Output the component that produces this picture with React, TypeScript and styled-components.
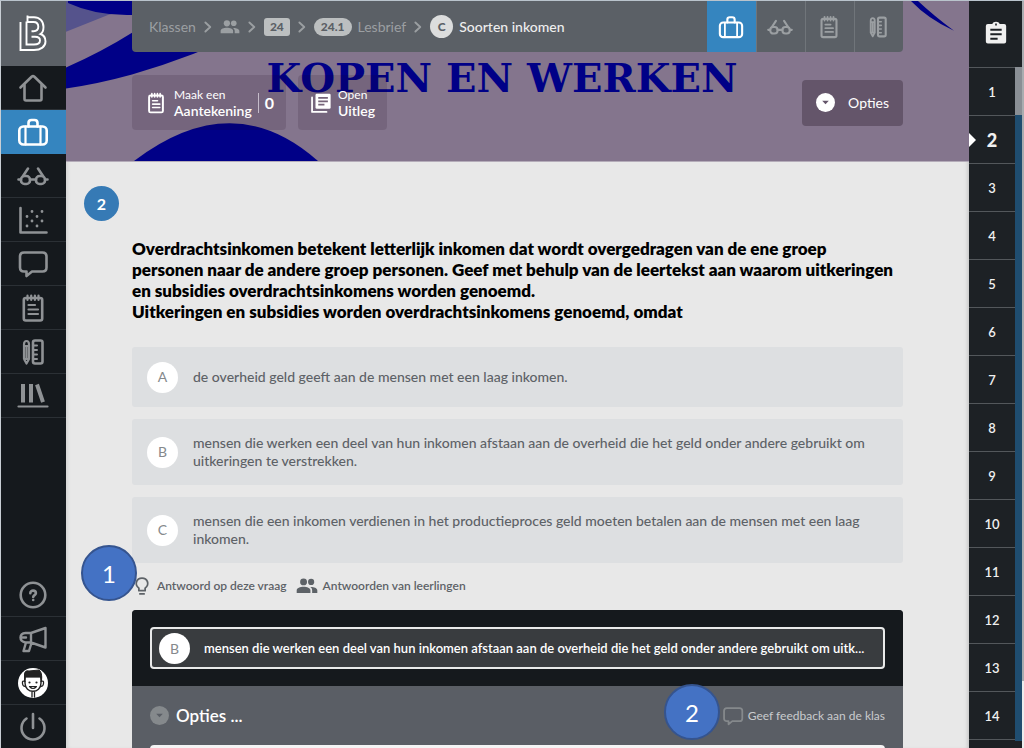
import React from "react";
import styled, { createGlobalStyle, css } from "styled-components";

const GlobalStyle = createGlobalStyle`
  *, *::before, *::after { box-sizing: border-box; }
  body {
    margin: 0;
    background: #e8e8e8;
    font-family: Lato, "Noto Sans", sans-serif;
    color: #000;
    overflow: hidden;
  }
  button { font: inherit; color: inherit; background: none; border: 0; padding: 0; cursor: pointer; }
  a { color: inherit; text-decoration: none; }
  h1, h2, p, ul, ol { margin: 0; padding: 0; }
  ul, ol { list-style: none; }
`;

/* ---------- icons ---------- */

type IconProps = { size?: number };

const Svg = styled.svg.attrs({ viewBox: "0 0 32 32", "aria-hidden": true })<{ $size: number }>`
  display: block;
  flex: none;
  width: ${(p) => p.$size}px;
  height: ${(p) => p.$size}px;
  fill: none;
  stroke: currentColor;
  stroke-width: 2.6;
  stroke-linecap: round;
  stroke-linejoin: round;
`;

const HomeIcon = ({ size = 32 }: IconProps) => (
  <Svg $size={size}>
    <path d="M3.500 15.500 14.600 4.800Q16 3.600 17.400 4.800L28.500 15.500" />
    <path d="M7.500 13V27Q7.500 28.500 9 28.500H23Q24.500 28.500 24.500 27V13" />
  </Svg>
);

const CaseIcon = ({ size = 32 }: IconProps) => (
  <Svg $size={size}>
    <rect x="2.300" y="10.500" width="27.400" height="18" rx="4" />
    <path strokeWidth="2.200" d="M8.500 10.500V28.500M23.500 10.500V28.500" />
    <path d="M11.500 10.500V7Q11.500 4 14.500 4H17.500Q20.500 4 20.500 7V10.500" />
  </Svg>
);

const GlassesIcon = ({ size = 32 }: IconProps) => (
  <Svg $size={size}>
    <rect x="4" y="16" width="9" height="8" rx="3.600" />
    <rect x="19" y="16" width="9" height="8" rx="3.600" />
    <path d="M1.500 19.500H4M28 19.500H30.500M13 19.500H19M6 16 11 8.500M26 16 21 8.500" />
  </Svg>
);

const ScatterIcon = ({ size = 32 }: IconProps) => (
  <Svg $size={size}>
    <path d="M3.500 4V28.500H29.500" />
    <path strokeWidth="2.800" d="M15 7.500h.01M25 7.500h.01M10 12.500h.01M20 12.500h.01M15 17h.01M25 17h.01M10 22h.01M20 22h.01" />
  </Svg>
);

const ChatIcon = ({ size = 32 }: IconProps) => (
  <Svg $size={size}>
    <path d="M7 4.500H25.500Q29.500 4.500 29.500 8.500V19.500Q29.500 23.500 25.500 23.500H15L9.500 28V23.500H7Q3 23.500 3 19.500V8.500Q3 4.500 7 4.500Z" />
  </Svg>
);

const NotesIcon = ({ size = 32 }: IconProps) => (
  <Svg $size={size}>
    <rect x="6.800" y="6" width="18.400" height="22.500" rx="2" />
    <path strokeWidth="2.200" d="M10.500 3.500V8M14.200 3.500V8M17.900 3.500V8M21.500 3.500V8M11.500 13H18M11.500 17.500H21M11.500 22H21" />
  </Svg>
);

const ToolsIcon = ({ size = 32 }: IconProps) => (
  <Svg $size={size}>
    <path strokeWidth="2.200" d="M7 8.500Q7 5 9.500 5T12 8.500V23L9.500 27.500 7 23ZM7 10H12M9.500 11V23M7 23H12" />
    <rect x="16" y="4.500" width="9.500" height="23" rx="2" />
    <path strokeWidth="2" d="M16 9.500H20M16 14H20M16 18.500H20M16 23H20" />
  </Svg>
);

const BooksIcon = ({ size = 32 }: IconProps) => (
  <Svg $size={size}>
    <path strokeLinecap="butt" strokeWidth="4" d="M6 4V22.500M14 4V22.500M20 4.500 26 22.200" />
    <path strokeWidth="2.200" d="M1.500 26.500H30.500" />
  </Svg>
);

const HelpIcon = () => (
  <Svg $size={32}>
    <circle cx="16" cy="16" r="12.300" />
    <path d="M13.300 14.200C13.300 10.700 18.900 10.800 18.900 14.200C18.900 16 16.200 16.200 16.200 18" />
    <path strokeWidth="2.600" d="M16.200 21h.01" />
  </Svg>
);

const MegaphoneIcon = () => (
  <Svg $size={32}>
    <path strokeWidth="2.400" d="M14 10H8.500Q3.500 10.500 3.500 14.500T8.500 19.500H14ZM14 10 28.500 5V24.500L14 19.500M9 19.500 6.500 28H12L14.500 20M3.500 14.500H9" />
  </Svg>
);

const PowerIcon = () => (
  <Svg $size={32}>
    <path d="M16 3V17M9.500 7.500A11.500 11.500 0 1 0 22.500 7.500" />
  </Svg>
);

const AvatarIcon = () => (
  <Svg $size={32}>
    <circle cx="16" cy="16" r="15" fill="#fff" stroke="none" />
    <path d="M8 9.500V16C8 27 24 27 24 16V9.500Z" fill="#fff" stroke="#222" strokeWidth="1.400" />
    <path d="M7.500 14V7Q8 3 12 4L22 3Q25.500 5 24.500 14L23.500 10H8.500Z" fill="#222" stroke="#222" strokeWidth="1" />
    <path d="M8 14.500Q5 13 5.500 16.500T8.500 19M24 14.500Q27 13 26.500 16.500T23.500 19M15 25V30M17.500 25V30" stroke="#222" strokeWidth="1.300" />
    <path d="M12.500 15.500h.01M19.500 15.500h.01" stroke="#222" strokeWidth="2.200" />
    <path d="M12.500 19.500H19.500Q16 23.500 12.500 19.500Z" fill="#fff" stroke="#222" strokeWidth="1.200" />
  </Svg>
);

const LogoSvg = styled.svg`
  width: 32px;
  height: 40px;
  fill: none;
  stroke: #fff;
  stroke-width: 1.900;
`;

const Logo = () => (
  <LogoSvg viewBox="0 0 32 40" role="img" aria-label="LB">
    <path d="M3.500 8V36H17C24 36 28.500 32.500 28.500 27.500C28.500 23.500 26.500 21 23.500 20C26 18.500 26.500 16 26.500 13C26.500 7 22.500 3.200 17 3.200H10.500" />
    <path d="M9.500 7.500V30.500H17C21 30.500 23 29 23 26.500C23 24 21 22.800 18 22.800H14.500" />
    <path d="M10.500 1.500V8H16.500C19.500 8 21.300 10 21.300 12.800C21.300 15.500 19.500 17.200 16.500 17.200H14.500" />
  </LogoSvg>
);

const PeopleIcon = ({ size = 22 }: IconProps) => (
  <Svg $size={size}>
    <g fill="currentColor" stroke="none">
      <circle cx="11" cy="10" r="5" />
      <circle cx="22" cy="10" r="4.500" />
      <path d="M1 26V22.500C1 15.500 21 15.500 21 22.500V26ZM22 17.500C26 17.500 31 19 31 22.500V26H23.500V22.500C23.500 20 22.500 18.500 20.500 17.500Z" />
    </g>
  </Svg>
);

const BulbIcon = () => (
  <Svg $size={20}>
    <path strokeWidth="2.800" strokeLinecap="butt" d="M11 23.500V19.500C3 13 7.500 3.500 16 3.500S29 13 21 19.500V23.500ZM11.500 28.500H20.500" />
  </Svg>
);

const BookStackIcon = () => (
  <Svg $size={22}>
    <path strokeWidth="2.600" d="M3 8V29H24" />
    <rect x="8" y="2.500" width="22" height="22" rx="2" fill="currentColor" stroke="none" />
    <path stroke="#766479" strokeLinecap="butt" d="M12 8.500H26M12 13.500H26M12 18.500H21" />
  </Svg>
);

const ClipboardIcon = () => (
  <Svg $size={26}>
    <path fill="currentColor" stroke="none" d="M6 5H11.500C12.500 1.200 19.500 1.200 20.500 5H26Q28.500 5 28.500 7.500V26.500Q28.500 29 26 29H6Q3.500 29 3.500 26.500V7.500Q3.500 5 6 5Z" />
    <path stroke="#1d2125" strokeWidth="2.600" strokeLinecap="butt" d="M9 12H23M9 17.500H23M9 23H18M15 5.500H17" />
  </Svg>
);

const DropDot = ({ tone, mark }: { tone: string; mark: string }) => (
  <Svg $size={19}>
    <circle cx="16" cy="16" r="16" fill={tone} stroke="none" />
    <path d="M10.500 13H21.500L16 19Z" fill={mark} stroke="none" />
  </Svg>
);

const ChevronIcon = () => (
  <Svg $size={12}>
    <path strokeWidth="5" d="M9 4 22 16 9 28" />
  </Svg>
);

/* ---------- shell ---------- */

const Shell = styled.div`
  display: grid;
  grid-template-columns: 66px minmax(0, 1fr) 55px;
  height: 100vh;
  border-top: 1px solid #b9c3cc;
`;

const Sidebar = styled.nav`
  display: flex;
  flex-direction: column;
  margin-bottom: -1px;
  background: #15191d;
  border-left: 1px solid #c8ced4;
  color: #8f9295;
  min-height: 0;
`;

const LogoLink = styled.a`
  display: grid;
  place-items: center;
  height: 65px;
  padding-right: 2px;
  background: #5b6066;
`;

const NavButton = styled.button<{ $active?: boolean }>`
  display: grid;
  place-items: center;
  width: 100%;
  height: 44px;
  padding-right: 2px;
  border-bottom: 1px solid #2b3035;
  ${(p) => p.$active && css`background: #3585bf; color: #fff; border-color: #3585bf;`}
`;

const Spacer = styled.div`
  flex: 1;
`;

const Main = styled.main`
  min-width: 0;
  overflow: hidden;
  box-shadow: inset 4px 0 4px -3px #cccccc, inset -4px 0 4px -3px #bdbdbd;
`;

/* ---------- banner ---------- */

const Banner = styled.header`
  position: relative;
  height: 161px;
  padding: 0 66px;
  background: #84758d;
  border-bottom: 1px solid #b4acb9;
`;

const Art = styled.svg`
  position: absolute;
  inset: 0;
  width: 100%;
  height: 100%;
`;

const BannerTitle = styled.h1`
  position: absolute;
  inset: 53px 31px auto 0;
  text-align: center;
  white-space: nowrap;
  font: bold 40px/48px "DejaVu Serif", serif;
  color: #000087;
`;

const TopBar = styled.div`
  position: relative;
  display: flex;
  justify-content: space-between;
  height: 51px;
  background: #5b6066;
  border-radius: 0 0 4px 4px;
  overflow: hidden;
`;

const Crumbs = styled.ol`
  display: flex;
  align-items: center;
  gap: 6px;
  padding-left: 17px;
  font-size: 14px;
  color: #9b9fa2;
  white-space: nowrap;
`;

const Crumb = styled.li<{ $current?: boolean }>`
  display: flex;
  align-items: center;
  gap: 6px;
  color: ${(p) => (p.$current ? "#eeeeee" : "inherit")};
  font-weight: ${(p) => (p.$current ? 500 : 400)};
`;

const Tag = styled.span<{ $round?: boolean }>`
  padding: 0 ${(p) => (p.$round ? 7 : 6)}px;
  border-radius: ${(p) => (p.$round ? 9 : 3)}px;
  background: #bcbfc0;
  color: #5b6066;
  font-size: 12px;
  font-weight: 900;
  line-height: 18px;
`;

const CircleTag = styled.span`
  display: grid;
  place-items: center;
  width: 23px;
  height: 23px;
  border-radius: 50%;
  background: #dcdddd;
  color: #5b6066;
  font-size: 12px;
  font-weight: 900;
`;

const Tools = styled.div`
  display: flex;
`;

const ToolButton = styled.button<{ $active?: boolean }>`
  display: grid;
  place-items: center;
  width: 49px;
  padding-right: 2px;
  border-left: 1px solid #70757a;
  color: #9b9fa2;
  ${(p) => p.$active && css`background: #3585bf; color: #fff; border-color: #3585bf;`}
`;

const ActionRow = styled.div`
  position: relative;
  display: flex;
  align-items: center;
  gap: 12px;
  height: 55px;
  margin-top: 23px;
  color: #fff;
  font-size: 14px;
`;

const ActionButton = styled.button`
  display: flex;
  align-items: center;
  gap: 6px;
  height: 55px;
  padding: 0 12px;
  border-radius: 4px;
  background: rgba(20, 0, 20, 0.13);
  text-align: left;
  line-height: 16px;
`;

const ActionText = styled.span`
  display: flex;
  flex-direction: column;
  font-size: 14px;
  font-weight: 600;
`;

const Small = styled.small`
  font-size: 12px;
  font-weight: 400;
`;

const Count = styled.strong`
  padding-left: 6px;
  border-left: 1px solid #c5bcca;
  font-size: 16px;
  line-height: 20px;
`;

const OptionsButton = styled.button`
  display: flex;
  align-items: center;
  gap: 13px;
  height: 46px;
  margin-left: auto;
  padding: 0 14px;
  border-radius: 4px;
  background: #64556a;
`;

/* ---------- question ---------- */

const Question = styled.section`
  position: relative;
  padding: 76px 66px 0;
`;

const QuestionNumber = styled.span`
  position: absolute;
  left: 18px;
  top: 24px;
  display: grid;
  place-items: center;
  width: 35px;
  height: 35px;
  border-radius: 50%;
  background: #367ab5;
  color: #fff;
  font-size: 16px;
  font-weight: 700;
`;

const Prompt = styled.h2`
  font-size: 17px;
  font-weight: 800;
  line-height: 21px;
`;

const Answers = styled.ul`
  display: flex;
  flex-direction: column;
  gap: 12px;
  padding-top: 25px;
`;

const Answer = styled.button`
  display: flex;
  align-items: center;
  gap: 15px;
  width: 100%;
  min-height: 60px;
  padding: 14px 15px;
  border-radius: 3px;
  background: #dddfe1;
  color: #5d6267;
  text-align: left;
  font-size: 14px;
  font-weight: 500;
  line-height: 18px;
`;

const AnswerText = styled.span`
  padding: 1px 0;
`;

const Letter = styled.span`
  display: grid;
  place-items: center;
  flex: none;
  width: 31px;
  height: 31px;
  border-radius: 50%;
  background: #fff;
  color: #85898c;
  font-size: 14px;
  font-weight: 400;
`;

const Reveal = styled.div`
  position: relative;
  display: flex;
  align-items: center;
  gap: 9px;
  height: 47px;
  padding-bottom: 2px;
  color: #5d6267;
  font-size: 12px;
  font-weight: 600;
`;

const RevealButton = styled.button`
  display: flex;
  align-items: center;
  gap: 5px;
`;

const Callout = styled.span<{ $left: string; $top: number }>`
  position: absolute;
  left: ${(p) => p.$left};
  top: ${(p) => p.$top}px;
  display: grid;
  place-items: center;
  width: 56px;
  height: 56px;
  border: 2px solid #35548f;
  border-radius: 50%;
  background: #4472c4;
  color: #fff;
  font-size: 24px;
  font-weight: 400;
`;

/* ---------- feedback panel ---------- */

const Panel = styled.section`
  border-radius: 4px 4px 0 0;
  background: #5a5e65;
`;

const Chosen = styled.div`
  padding: 17px 18px;
  border-radius: 4px 4px 0 0;
  background: #15191d;
`;

const ChosenBox = styled.div`
  display: flex;
  align-items: center;
  gap: 14px;
  height: 42px;
  padding: 0 7px;
  border: 2px solid #e9eaea;
  border-radius: 4px;
  background: #393c3f;
  color: #fff;
  font-size: 13px;
  font-weight: 600;
`;

const PanelBar = styled.div`
  position: relative;
  display: flex;
  align-items: center;
  justify-content: space-between;
  height: 59px;
  padding: 0 18px;
`;

const PanelOptions = styled.button`
  display: flex;
  align-items: center;
  gap: 7px;
  color: #fff;
  font-size: 17px;
  font-weight: 600;
`;

const Feedback = styled.button`
  display: flex;
  align-items: center;
  gap: 4px;
  color: #c9cbcd;
  font-size: 12px;
`;

const Muted = styled.span`
  color: #85898c;
`;

const Sheet = styled.div`
  height: 60px;
  margin: 0 18px;
  border-radius: 4px 4px 0 0;
  background: #f4f4f4;
`;

/* ---------- question list ---------- */

const Rail = styled.aside`
  display: grid;
  grid-template-columns: 1fr 7px 2px;
  grid-template-rows: 66px minmax(0, 1fr);
  background: #1d2125;
  overflow: hidden;
`;

const RailHead = styled.button`
  display: grid;
  place-items: center;
  grid-column: 1 / 3;
  padding-bottom: 2px;
  color: #f0f0f0;
`;

const RailList = styled.ol`
  grid-column: 1;
  grid-row: 2;
`;

const RailItem = styled.li`
  height: 48px;
  border-top: 1px solid #53575b;
`;

const RailLink = styled.a<{ $current: boolean }>`
  position: relative;
  display: grid;
  place-items: center;
  height: 100%;
  color: #f0f0f0;
  font-size: ${(p) => (p.$current ? 18 : 13)}px;
  font-weight: ${(p) => (p.$current ? 900 : 600)};
  ${(p) =>
    p.$current &&
    css`
      &::before {
        content: "";
        position: absolute;
        left: 0;
        border: 7px solid transparent;
        border-left-color: #fff;
        border-right-width: 0;
      }
    `}
`;

const RailTrack = styled.div`
  grid-column: 2;
  grid-row: 2;
  margin-bottom: 7px;
  border-top: 48px solid #8a8f95;
  background: #1f4d70;
`;

const PageTrack = styled.div`
  grid-column: 3;
  grid-row: 1 / 3;
  background: linear-gradient(#a9adb0 680px, #eceded 680px);
`;

const sideTop = [
  { label: "Home", icon: <HomeIcon /> },
  { label: "Lesmateriaal", icon: <CaseIcon />, active: true },
  { label: "Nakijken", icon: <GlassesIcon /> },
  { label: "Resultaten", icon: <ScatterIcon /> },
  { label: "Berichten", icon: <ChatIcon /> },
  { label: "Aantekeningen", icon: <NotesIcon /> },
  { label: "Gereedschap", icon: <ToolsIcon /> },
  { label: "Bibliotheek", icon: <BooksIcon /> },
];

const sideBottom = [
  { label: "Help", icon: <HelpIcon /> },
  { label: "Nieuws", icon: <MegaphoneIcon /> },
  { label: "Profiel", icon: <AvatarIcon /> },
  { label: "Uitloggen", icon: <PowerIcon /> },
];

const tools = [
  { label: "Lesmateriaal", icon: <CaseIcon size={26} />, active: true },
  { label: "Nakijken", icon: <GlassesIcon size={26} /> },
  { label: "Aantekeningen", icon: <NotesIcon size={26} /> },
  { label: "Gereedschap", icon: <ToolsIcon size={26} /> },
];

const answers = [
  ["A", "de overheid geld geeft aan de mensen met een laag inkomen."],
  ["B", "mensen die werken een deel van hun inkomen afstaan aan de overheid die het geld onder andere gebruikt om uitkeringen te verstrekken."],
  ["C", "mensen die een inkomen verdienen in het productieproces geld moeten betalen aan de mensen met een laag inkomen."],
];

const shorten = (text: string, length: number) => `${text.slice(0, length)}...`;

const questionCount = 14;
const currentQuestion = 2;

export default function App() {
  return (
    <>
      <GlobalStyle />
      <Shell>
        <Sidebar>
          <LogoLink href="#"><Logo /></LogoLink>
          {sideTop.map((s) => (
            <NavButton key={s.label} aria-label={s.label} $active={s.active}>{s.icon}</NavButton>
          ))}
          <Spacer />
          {sideBottom.map((s) => (
            <NavButton key={s.label} aria-label={s.label}>{s.icon}</NavButton>
          ))}
        </Sidebar>

        <Main>
          <Banner>
            <Art viewBox="0 0 903 161" preserveAspectRatio="none" aria-hidden="true">
              <path d="M0 0H90L42 14 0 31Z" fill="#55538c" />
              <path d="M2 0H66V14Q30 15 2 2Z" fill="#000087" />
              <path d="M0 67Q36 51 66 32L110 0H240Q150 50 66 74Q30 84 0 88Z" fill="#000087" />
              <path d="M68 161Q167 85 252 161Z" fill="#000087" />
              <path d="M845 0H852Q868 15 888 30Q862 18 845 0Z" fill="#000087" />
            </Art>
            <BannerTitle>KOPEN EN WERKEN</BannerTitle>
            <TopBar>
              <Crumbs>
                <Crumb><a href="#">Klassen</a></Crumb>
                <ChevronIcon />
                <Crumb><PeopleIcon size={20} /></Crumb>
                <ChevronIcon />
                <Crumb><Tag>24</Tag></Crumb>
                <ChevronIcon />
                <Crumb><Tag $round>24.1</Tag><a href="#">Lesbrief</a></Crumb>
                <ChevronIcon />
                <Crumb $current><CircleTag>C</CircleTag>Soorten inkomen</Crumb>
              </Crumbs>
              <Tools>
                {tools.map((t) => (
                  <ToolButton key={t.label} aria-label={t.label} $active={t.active}>{t.icon}</ToolButton>
                ))}
              </Tools>
            </TopBar>
            <ActionRow>
              <ActionButton>
                <NotesIcon size={24} />
                <ActionText><Small>Maak een</Small>Aantekening</ActionText>
                <Count>0</Count>
              </ActionButton>
              <ActionButton>
                <BookStackIcon />
                <ActionText><Small>Open</Small>Uitleg</ActionText>
              </ActionButton>
              <OptionsButton>
                <DropDot tone="#fff" mark="#64556a" />
                Opties
              </OptionsButton>
            </ActionRow>
          </Banner>

          <Question>
            <QuestionNumber>2</QuestionNumber>
            <Prompt>
              Overdrachtsinkomen betekent letterlijk inkomen dat wordt overgedragen van de ene groep
              <br />
              personen naar de andere groep personen. Geef met behulp van de leertekst aan waarom uitkeringen
              <br />
              en subsidies overdrachtsinkomens worden genoemd.
              <br />
              Uitkeringen en subsidies worden overdrachtsinkomens genoemd, omdat
            </Prompt>
            <Answers>
              {answers.map(([letter, text]) => (
                <li key={letter}>
                  <Answer><Letter>{letter}</Letter><AnswerText>{text}</AnswerText></Answer>
                </li>
              ))}
            </Answers>
            <Reveal>
              <RevealButton><BulbIcon />Antwoord op deze vraag</RevealButton>
              <RevealButton><PeopleIcon />Antwoorden van leerlingen</RevealButton>
              <Callout $left="-51px" $top={-18}>1</Callout>
            </Reveal>
            <Panel>
              <Chosen>
                <ChosenBox>
                  <Letter>B</Letter>
                  <span>{shorten(answers[1][1], 109)}</span>
                </ChosenBox>
              </Chosen>
              <PanelBar>
                <PanelOptions><DropDot tone="#85898c" mark="#5a5e65" />Opties ...</PanelOptions>
                <Feedback><Muted><ChatIcon size={22} /></Muted>Geef feedback aan de klas</Feedback>
                <Callout $left="calc(100% - 239px)" $top={-2}>2</Callout>
              </PanelBar>
              <Sheet />
            </Panel>
          </Question>
        </Main>

        <Rail>
          <RailHead aria-label="Overzicht"><ClipboardIcon /></RailHead>
          <RailList>
            {Array.from({ length: questionCount }, (_, i) => i + 1).map((n) => (
              <RailItem key={n}>
                <RailLink href="#" $current={n === currentQuestion}>{n}</RailLink>
              </RailItem>
            ))}
            <RailItem />
          </RailList>
          <RailTrack />
          <PageTrack />
        </Rail>
      </Shell>
    </>
  );
}
